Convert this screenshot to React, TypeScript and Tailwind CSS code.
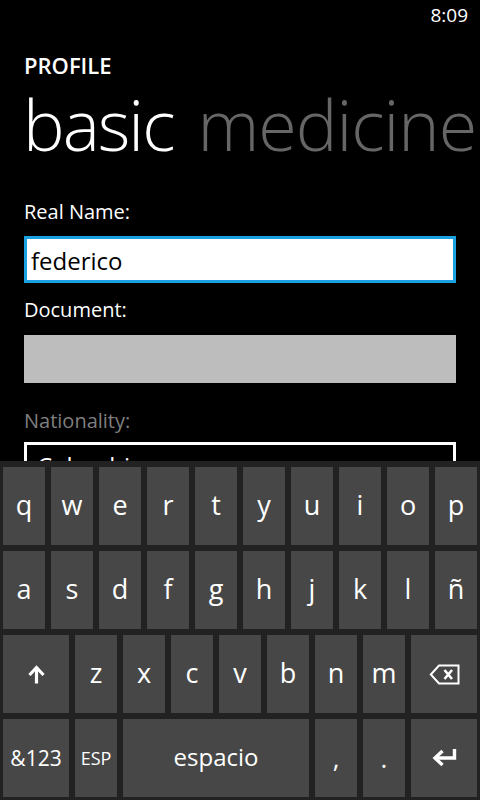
import { ReactNode } from "react";

const rowOne = ["q", "w", "e", "r", "t", "y", "u", "i", "o", "p"];
const rowTwo = ["a", "s", "d", "f", "g", "h", "j", "k", "l", "ñ"];
const rowThree = ["z", "x", "c", "v", "b", "n", "m"];

function Key({ children, className = "w-[42px]" }: { children: ReactNode; className?: string }) {
  return (
    <div className={`${className} h-[78px] bg-[#474747] text-white flex items-center justify-center`}>
      {children}
    </div>
  );
}

function ShiftIcon() {
  return (
    <svg width="19" height="19" viewBox="0 0 19 19" fill="none" stroke="white" strokeWidth="3.2">
      <path d="M9.5 18.5V3" />
      <path d="M2.5 10L9.5 2.5L16.5 10" strokeLinejoin="miter" />
    </svg>
  );
}

function BackspaceIcon() {
  return (
    <svg width="31" height="21" viewBox="0 0 31 21" fill="none" stroke="white">
      <path d="M10 1.5H29.5V19.5H10L1.8 10.5Z" strokeWidth="2" />
      <path d="M15.5 6L23 15M23 6L15.5 15" strokeWidth="2.6" />
    </svg>
  );
}

function EnterIcon() {
  return (
    <svg width="27" height="20" viewBox="0 0 27 20" fill="none" stroke="white" strokeWidth="3.4">
      <path d="M23.5 1V10H5" />
      <path d="M11.5 3L4 10L11.5 17" />
    </svg>
  );
}

function Keyboard() {
  return (
    <div className="absolute left-0 bottom-0 w-[480px] h-[339px] bg-[#222222] pt-[6px] px-[3px] pb-[3px] flex flex-col gap-[6px]">
      <div className="flex gap-[6px]">
        {rowOne.map((k) => (
          <Key key={k}>
            <span className="text-[27px] leading-none pb-[3px]">{k}</span>
          </Key>
        ))}
      </div>
      <div className="flex gap-[6px]">
        {rowTwo.map((k) => (
          <Key key={k}>
            <span className="text-[27px] leading-none pb-[3px]">{k}</span>
          </Key>
        ))}
      </div>
      <div className="flex gap-[6px]">
        <Key className="w-[66px]">
          <ShiftIcon />
        </Key>
        {rowThree.map((k) => (
          <Key key={k}>
            <span className="text-[27px] leading-none pb-[3px]">{k}</span>
          </Key>
        ))}
        <Key className="w-[66px]">
          <BackspaceIcon />
        </Key>
      </div>
      <div className="flex gap-[6px]">
        <Key className="w-[66px]">
          <span className="text-[21px] leading-none">&amp;123</span>
        </Key>
        <Key>
          <span className="text-[18px] leading-none">ESP</span>
        </Key>
        <Key className="w-[186px]">
          <span className="text-[24px] leading-none pb-[2px]">espacio</span>
        </Key>
        <Key>
          <span className="text-[26px] leading-none">,</span>
        </Key>
        <Key>
          <span className="text-[26px] leading-none">.</span>
        </Key>
        <Key className="w-[66px]">
          <EnterIcon />
        </Key>
      </div>
    </div>
  );
}

export default function App() {
  return (
    <div className="relative w-[480px] h-[800px] bg-black overflow-hidden font-['Open_Sans',sans-serif] text-white">
      {/* status bar */}
      <div className="h-[30px] flex items-center justify-end pr-[12px]">
        <span className="text-[19px] leading-none">8:09</span>
      </div>

      <div className="px-[24px]">
        <div className="mt-[24px] text-[22px] leading-[22px] font-semibold">PROFILE</div>
        <div className="mt-[13px] h-[70px] flex gap-[24px] text-[70px] leading-[70px] font-light whitespace-nowrap -ml-[1px]">
          <span className="tracking-[-2px]">basic</span>
          <span className="tracking-[-1px] text-[#666666]">medicine</span>
        </div>

        <div className="mt-[43px] text-[20px] leading-[20px]">Real Name:</div>
        <div className="mt-[14px] h-[47px] border-[3px] border-[#1ba1e2] bg-white flex items-center pl-[4px]">
          <span className="text-[24px] leading-[41px] text-black pt-[1px]">federico</span>
        </div>

        <div className="mt-[17px] text-[20px] leading-[20px]">Document:</div>
        <div className="mt-[15px] h-[48px] bg-[#bdbdbd]" />

        <div className="mt-[28px] text-[20px] leading-[20px] text-[#7f7f7f]">Nationality:</div>
        <div className="mt-[11px] h-[48px] border-[3px] border-white flex items-center pl-[10px]">
          <span className="text-[24px] leading-none">Colombia</span>
        </div>
      </div>

      <Keyboard />
    </div>
  );
}
